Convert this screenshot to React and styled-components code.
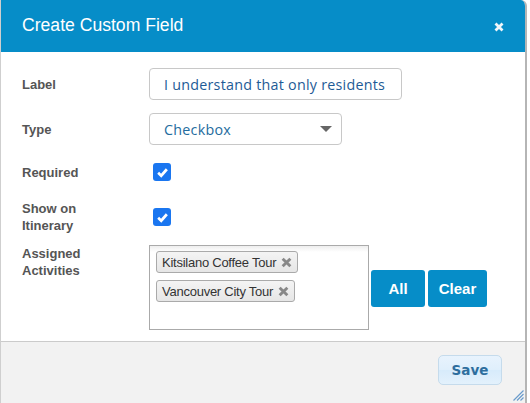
import React from "react";
import styled, { createGlobalStyle } from "styled-components";

const Global = createGlobalStyle`
  html, body { margin: 0; padding: 0; background: #fff; }
  body { font-family: "Liberation Sans", Arial, sans-serif; overflow: hidden; }
  * { box-sizing: border-box; }
`;

const Dialog = styled.div`
  width: 527px;
  height: 403px;
  display: flex;
  flex-direction: column;
  border-left: 1px solid #cfcfcf;
  border-right: 2px solid #b5b5b5;
  border-top-right-radius: 6px;
  overflow: hidden;
  position: relative;
  background: #fff;
`;

const Header = styled.div`
  height: 52px;
  flex: none;
  background: #068dc8;
  display: flex;
  align-items: center;
  justify-content: space-between;
  padding: 0 21px 0 21px;
  color: #fff;
`;

const Title = styled.h1`
  margin: 0;
  font-size: 17.6px;
  font-weight: normal;
  font-family: "Liberation Sans", Arial, sans-serif;
  padding-bottom: 2px;
`;

const Close = styled.span`
  display: flex;
  width: 10px;
  height: 10px;
  margin-top: 2px;
`;

const Body = styled.div`
  flex: 1;
  padding: 16px 21px 0 21px;
  display: flex;
  flex-direction: column;
`;

const Row = styled.div`
  display: grid;
  grid-template-columns: 127px 1fr;
  align-items: ${(p) => (p.$top ? "start" : "center")};
  margin-bottom: ${(p) => p.$mb || 0}px;
  min-height: ${(p) => p.$h || 0}px;
`;

const FieldLabel = styled.label`
  font-size: 13px;
  font-weight: bold;
  color: #555;
  line-height: 17px;
  margin-top: ${(p) => p.$mt || 0}px;
`;

const TextInput = styled.div`
  width: 253px;
  height: 32px;
  border: 1px solid #c8c8c8;
  border-radius: 4px;
  padding: 0 14px;
  display: flex;
  align-items: center;
  font-family: "Open Sans", sans-serif;
  font-size: 14.3px;
  letter-spacing: 0.25px;
  color: #1e5b96;
  white-space: nowrap;
  overflow: hidden;
`;

const Select = styled.div`
  width: 193px;
  height: 32px;
  border: 1px solid #c8c8c8;
  border-radius: 4px;
  padding: 0 8px 0 14px;
  display: flex;
  align-items: center;
  justify-content: space-between;
  font-family: "Open Sans", sans-serif;
  font-size: 14.3px;
  letter-spacing: 0.25px;
  color: #246c9e;
`;

const Caret = styled.span`
  width: 0;
  height: 0;
  border-left: 6px solid transparent;
  border-right: 6px solid transparent;
  border-top: 6px solid #666;
  margin-right: 1px;
`;

const Check = styled.span`
  width: 18px;
  height: 18px;
  margin-left: 4px;
  border-radius: 3px;
  background: #1a76f0;
  display: flex;
  align-items: center;
  justify-content: center;
`;

const ActivitiesWrap = styled.div`
  display: flex;
  align-items: center;
  gap: 2px;
`;

const MultiBox = styled.div`
  width: 220px;
  height: 85px;
  border: 1px solid #aaa;
  padding: 5px 6px;
  display: flex;
  flex-direction: column;
  align-items: flex-start;
  gap: 7px;
  background: linear-gradient(#eee 0, #fff 6px);
`;

const Tag = styled.span`
  display: inline-flex;
  align-items: center;
  gap: 5px;
  height: 22px;
  padding: 0 5px 0 5px;
  border: 1px solid #aaa;
  border-radius: 3px;
  background: linear-gradient(#f4f4f4, #e6e6e6);
  font-size: 13px;
  color: #333;
  letter-spacing: -0.25px;
`;

const TagX = styled.span`
  display: flex;
  width: 11px;
  height: 11px;
`;

const Buttons = styled.div`
  display: flex;
  gap: 3px;
  margin-top: 2px;
`;

const BlueBtn = styled.button`
  height: 37px;
  width: ${(p) => p.$w}px;
  padding: 0;
  border: none;
  border-radius: 3px;
  background: #068dc8;
  color: #fff;
  font-family: "Liberation Sans", Arial, sans-serif;
  font-weight: bold;
  font-size: 15px;
`;

const Footer = styled.div`
  height: 62px;
  flex: none;
  background: #f2f2f2;
  border-top: 1px solid #cbcbcb;
  display: flex;
  justify-content: flex-end;
  align-items: flex-start;
  padding: 13px 23px 0 0;
  position: relative;
`;

const SaveBtn = styled.button`
  width: 64px;
  height: 30px;
  border: 1px solid #c5dbec;
  border-radius: 5px;
  background: linear-gradient(#e8f3fd 0%, #dfeffc 50%, #d7ebfb 51%, #e3f1fc 100%);
  color: #2e6e9e;
  font-family: "DejaVu Sans", Verdana, sans-serif;
  font-weight: bold;
  font-size: 13.5px;
`;

const Grip = styled.span`
  position: absolute;
  right: 1px;
  bottom: 2px;
  width: 12px;
  height: 12px;
  display: flex;
`;

const XIcon = ({ color, w = 3 }) => (
  <svg width="100%" height="100%" viewBox="0 0 10 10">
    <path d="M1.5 1.5 L8.5 8.5 M8.5 1.5 L1.5 8.5" stroke={color} strokeWidth={w} strokeLinecap="butt" />
  </svg>
);

const Tick = () => (
  <svg width="13" height="13" viewBox="0 0 12 12">
    <path d="M2 6.3 L4.8 9 L10 3" fill="none" stroke="#fff" strokeWidth="2.5" />
  </svg>
);

export default function App() {
  return (
    <>
      <Global />
      <Dialog>
        <Header>
          <Title>Create Custom Field</Title>
          <Close>
            <XIcon color="#f0f6fa" w={2.8} />
          </Close>
        </Header>
        <Body>
          <Row $mb={13}>
            <FieldLabel>Label</FieldLabel>
            <TextInput>I understand that only residents</TextInput>
          </Row>
          <Row $mb={10}>
            <FieldLabel>Type</FieldLabel>
            <Select>
              Checkbox
              <Caret />
            </Select>
          </Row>
          <Row $h={34} $mb={10}>
            <FieldLabel>Required</FieldLabel>
            <Check>
              <Tick />
            </Check>
          </Row>
          <Row $h={36} $mb={10}>
            <FieldLabel>
              Show on
              <br />
              Itinerary
            </FieldLabel>
            <Check>
              <Tick />
            </Check>
          </Row>
          <Row $top>
            <FieldLabel $mt={0}>
              Assigned
              <br />
              Activities
            </FieldLabel>
            <ActivitiesWrap>
              <MultiBox>
                <Tag>
                  Kitsilano Coffee Tour
                  <TagX>
                    <XIcon color="#888" w={2.6} />
                  </TagX>
                </Tag>
                <Tag>
                  Vancouver City Tour
                  <TagX>
                    <XIcon color="#888" w={2.6} />
                  </TagX>
                </Tag>
              </MultiBox>
              <Buttons>
                <BlueBtn $w={54}>All</BlueBtn>
                <BlueBtn $w={59}>Clear</BlueBtn>
              </Buttons>
            </ActivitiesWrap>
          </Row>
        </Body>
        <Footer>
          <SaveBtn>Save</SaveBtn>
          <Grip>
            <svg width="12" height="12" viewBox="0 0 12 12">
              <path d="M11.5 1.5 L1.5 11.5 M11.5 5 L5 11.5 M11.5 8.5 L8.5 11.5" stroke="#6b9ccc" strokeWidth="1.2" />
            </svg>
          </Grip>
        </Footer>
      </Dialog>
    </>
  );
}
